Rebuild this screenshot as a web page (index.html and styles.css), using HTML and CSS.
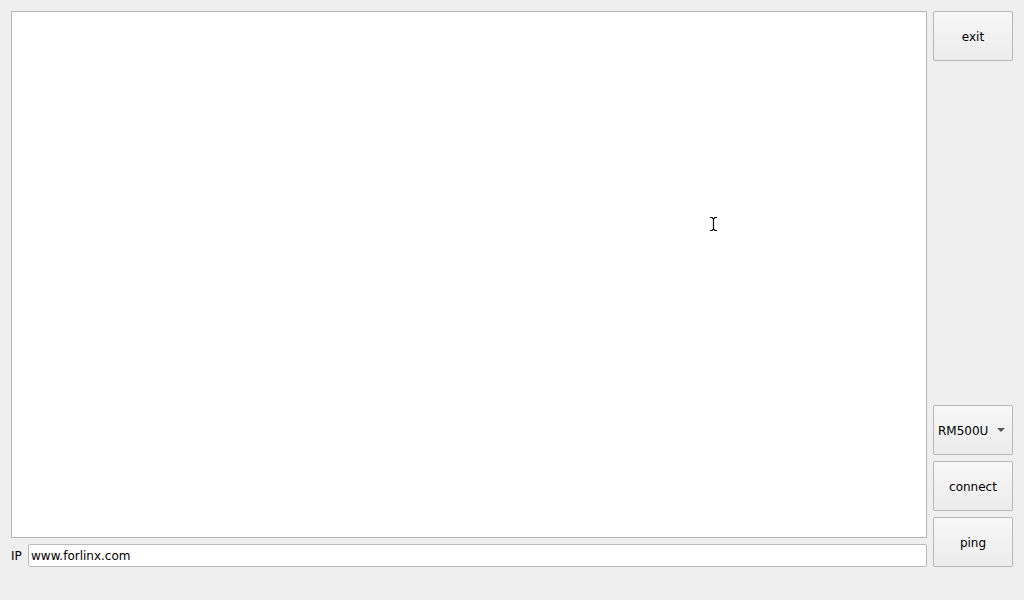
FILE: index.html
```html
<!DOCTYPE html>
<html>
<head>
<meta charset="utf-8">
<link rel="stylesheet" href="styles.css">
</head>
<body>
<div class="window">
  <div class="left">
    <div class="editor">
      <svg class="cursor" width="9" height="16" viewBox="0 0 9 16"><path d="M1 1.5h2l1.5 1.5 1.5-1.5h2M4.5 3v10M1 14.5h2l1.5-1.5 1.5 1.5h2" fill="none" stroke="#000" stroke-width="1.2"/></svg>
    </div>
    <div class="iprow">
      <span class="iplabel">IP</span>
      <div class="ipinput">www.forlinx.com</div>
    </div>
  </div>
  <div class="right">
    <div class="btn">exit</div>
    <div class="spacer"></div>
    <div class="btn combo"><span>RM500U</span><span class="arrow"></span></div>
    <div class="btn">connect</div>
    <div class="btn">ping</div>
  </div>
</div>
</body>
</html>
```
FILE: styles.css
```css
html, body {
  margin: 0;
  padding: 0;
  background: #efefef;
  font-family: "DejaVu Sans", sans-serif;
  font-size: 12px;
  color: #000;
}
.window {
  box-sizing: border-box;
  width: 1024px;
  height: 600px;
  padding: 11px 11px 33px 11px;
  display: flex;
  gap: 6px;
}
.left {
  flex: 1;
  display: flex;
  flex-direction: column;
  gap: 6px;
}
.editor {
  flex: 1;
  background: #fff;
  border: 1px solid #b4b4b4;
  position: relative;
}
.cursor {
  position: absolute;
  left: 697px;
  top: 204px;
}
.iprow {
  height: 23px;
  display: flex;
  align-items: center;
  gap: 6px;
}
.iplabel {
  width: 11px;
  padding-top: 1px;
}
.ipinput {
  flex: 1;
  box-sizing: border-box;
  height: 23px;
  background: #fff;
  border: 1px solid #b9b9b9;
  border-radius: 2px;
  padding: 1px 0 0 2px;
  line-height: 21px;
}
.right {
  width: 80px;
  display: flex;
  flex-direction: column;
  gap: 6px;
}
.spacer {
  flex: 1;
}
.btn {
  box-sizing: border-box;
  height: 50px;
  padding-top: 2px;
  border: 1px solid #b7b7b7;
  border-radius: 2px;
  background: linear-gradient(#f7f7f7, #ececec);
  display: flex;
  align-items: center;
  justify-content: center;
}
.combo {
  justify-content: space-between;
  padding: 2px 7px 0 4px;
}
.arrow {
  width: 0;
  height: 0;
  margin-bottom: 2px;
  border-left: 4px solid transparent;
  border-right: 4px solid transparent;
  border-top: 4px solid #555;
}
```
